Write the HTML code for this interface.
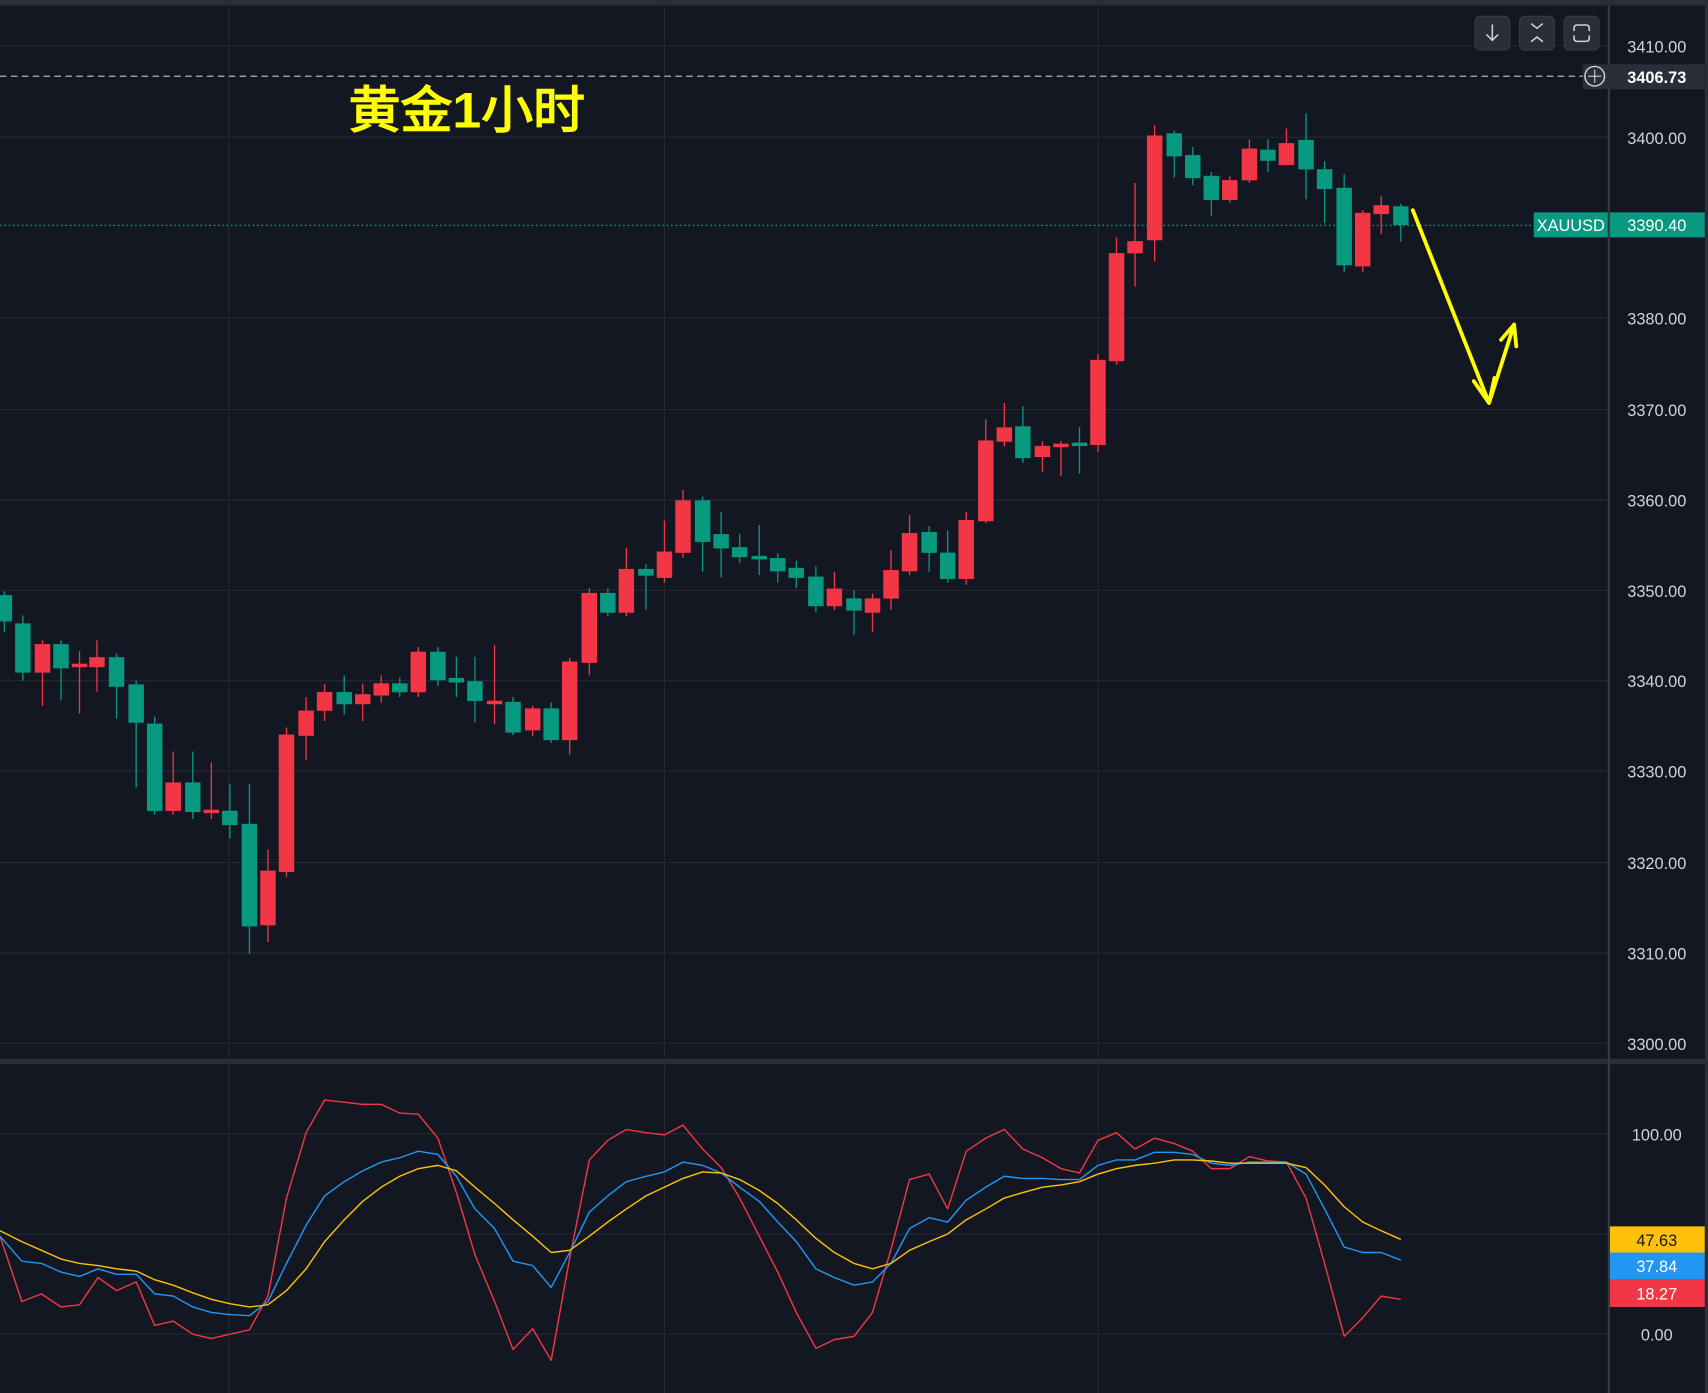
<!DOCTYPE html>
<html><head><meta charset="utf-8"><style>
html,body{margin:0;padding:0;background:#131722;overflow:hidden}
svg{display:block}
text{font-family:"Liberation Sans","DejaVu Sans",sans-serif}
</style></head><body>
<svg width="1708" height="1393" viewBox="0 0 1568 1279" preserveAspectRatio="none" xmlns="http://www.w3.org/2000/svg">
<rect width="1568" height="1279" fill="#131722"/>
<rect x="0" y="0" width="1568" height="5" fill="#2a2e39"/>
<g stroke="#242832" stroke-width="1">
<line x1="0" y1="42" x2="1477" y2="42"/><line x1="0" y1="126" x2="1477" y2="126"/><line x1="0" y1="292" x2="1477" y2="292"/><line x1="0" y1="376" x2="1477" y2="376"/><line x1="0" y1="459" x2="1477" y2="459"/><line x1="0" y1="542" x2="1477" y2="542"/><line x1="0" y1="625" x2="1477" y2="625"/><line x1="0" y1="708" x2="1477" y2="708"/><line x1="0" y1="792" x2="1477" y2="792"/><line x1="0" y1="875" x2="1477" y2="875"/><line x1="0" y1="958" x2="1477" y2="958"/>
<line x1="0" y1="1041" x2="1477" y2="1041"/><line x1="0" y1="1133" x2="1477" y2="1133"/><line x1="0" y1="1225" x2="1477" y2="1225"/>
<line x1="210" y1="5" x2="210" y2="1279"/><line x1="610" y1="5" x2="610" y2="1279"/><line x1="1008" y1="5" x2="1008" y2="1279"/>
</g>
<rect x="0" y="972" width="1568" height="5" fill="#2a2e39"/>
<line x1="1477" y1="5" x2="1477" y2="1279" stroke="#363a45" stroke-width="2"/>
<rect x="1565" y="5" width="3" height="1274" fill="#2a2e39"/>
<g fill="#d1d4dc" font-size="15" text-anchor="middle">
<text x="1521" y="48">3410.00</text><text x="1521" y="132">3400.00</text><text x="1521" y="298">3380.00</text><text x="1521" y="382">3370.00</text><text x="1521" y="465">3360.00</text><text x="1521" y="548">3350.00</text><text x="1521" y="631">3340.00</text><text x="1521" y="714">3330.00</text><text x="1521" y="798">3320.00</text><text x="1521" y="881">3310.00</text><text x="1521" y="964">3300.00</text>
<text x="1521" y="1047">100.00</text><text x="1521" y="1231">0.00</text>
</g>
<line x1="0" y1="70" x2="1453" y2="70" stroke="#b2b5be" stroke-width="1.2" stroke-dasharray="6,4"/>
<rect x="1453" y="59" width="112" height="23" fill="#2a2e39"/>
<circle cx="1464" cy="70" r="9" fill="none" stroke="#d1d4dc" stroke-width="1.3"/>
<line x1="1458" y1="70" x2="1470" y2="70" stroke="#d1d4dc"/><line x1="1464" y1="64" x2="1464" y2="76" stroke="#d1d4dc"/>
<text x="1521" y="76" fill="#ffffff" font-size="15" font-weight="bold" text-anchor="middle">3406.73</text>
<line x1="0" y1="207" x2="1408" y2="207" stroke="#089981" stroke-width="1.2" stroke-dasharray="1.5,2.5"/>
<rect x="1408" y="195" width="68" height="23" fill="#089981"/>
<rect x="1478" y="195" width="87" height="23" fill="#089981"/>
<text x="1442" y="212" fill="#fff" font-size="15" text-anchor="middle">XAUUSD</text>
<text x="1521" y="212" fill="#fff" font-size="15" text-anchor="middle">3390.40</text>
<g fill="#2a2e39" stroke="#363a45"><rect x="1354" y="15" width="32" height="31" rx="5"/><rect x="1395" y="15" width="32" height="31" rx="5"/><rect x="1436" y="15" width="32" height="31" rx="5"/></g>
<g stroke="#d1d4dc" stroke-width="1.4" fill="none" stroke-linecap="round">
<path d="M1370 23 V37 M1365 32 L1370 37 L1375 32"/>
<path d="M1406 22 L1411 26 L1416 22 M1406 38 L1411 34 L1416 38"/>
<path d="M1445 28 V26 Q1445 23 1448 23 H1456 Q1459 23 1459 26 V28 M1445 33 V35 Q1445 38 1448 38 H1456 Q1459 38 1459 35 V33"/>
</g>
<text x="320" y="117" fill="#ffff00" font-size="46" font-weight="900" textLength="217" lengthAdjust="spacingAndGlyphs" font-family="'Noto Serif CJK SC','Liberation Serif',serif">黄金<tspan font-family="'Liberation Sans',sans-serif" font-weight="bold">1</tspan>小时</text>
<g stroke-width="1.2">
<g stroke="#089981" fill="#089981">
<line x1="4" y1="543" x2="4" y2="580"/><rect x="-2.5" y="547" width="13" height="23"/>
<line x1="21" y1="565" x2="21" y2="625"/><rect x="14.5" y="573" width="13" height="44"/>
<line x1="56" y1="588" x2="56" y2="643"/><rect x="49.5" y="592" width="13" height="21"/>
<line x1="107" y1="600" x2="107" y2="660"/><rect x="100.5" y="604" width="13" height="26"/>
<line x1="125" y1="625" x2="125" y2="723"/><rect x="118.5" y="629" width="13" height="34"/>
<line x1="142" y1="658" x2="142" y2="748"/><rect x="135.5" y="665" width="13" height="79"/>
<line x1="177" y1="690" x2="177" y2="752"/><rect x="170.5" y="719" width="13" height="26"/>
<line x1="211" y1="720" x2="211" y2="770"/><rect x="204.5" y="745" width="13" height="12"/>
<line x1="229" y1="720" x2="229" y2="876"/><rect x="222.5" y="757" width="13" height="93"/>
<line x1="316" y1="620" x2="316" y2="656"/><rect x="309.5" y="636" width="13" height="10"/>
<line x1="367" y1="622" x2="367" y2="640"/><rect x="360.5" y="628" width="13" height="7"/>
<line x1="402" y1="594" x2="402" y2="630"/><rect x="395.5" y="599" width="13" height="25"/>
<line x1="419" y1="603" x2="419" y2="640"/><rect x="412.5" y="623" width="13" height="3"/>
<line x1="436" y1="603" x2="436" y2="663"/><rect x="429.5" y="626" width="13" height="17"/>
<line x1="471" y1="640" x2="471" y2="675"/><rect x="464.5" y="645" width="13" height="27"/>
<line x1="506" y1="645" x2="506" y2="682"/><rect x="499.5" y="651" width="13" height="28"/>
<line x1="558" y1="540" x2="558" y2="566"/><rect x="551.5" y="545" width="13" height="17"/>
<line x1="593" y1="518" x2="593" y2="560"/><rect x="586.5" y="523" width="13" height="5"/>
<line x1="645" y1="456" x2="645" y2="525"/><rect x="638.5" y="460" width="13" height="37"/>
<line x1="662" y1="470" x2="662" y2="530"/><rect x="655.5" y="491" width="13" height="12"/>
<line x1="679" y1="490" x2="679" y2="517"/><rect x="672.5" y="503" width="13" height="8"/>
<line x1="697" y1="482" x2="697" y2="528"/><rect x="690.5" y="511" width="13" height="2"/>
<line x1="714" y1="508" x2="714" y2="535"/><rect x="707.5" y="513" width="13" height="11"/>
<line x1="731" y1="515" x2="731" y2="540"/><rect x="724.5" y="522" width="13" height="8"/>
<line x1="749" y1="520" x2="749" y2="562"/><rect x="742.5" y="530" width="13" height="26"/>
<line x1="784" y1="542" x2="784" y2="583"/><rect x="777.5" y="550" width="13" height="10"/>
<line x1="853" y1="483" x2="853" y2="525"/><rect x="846.5" y="489" width="13" height="18"/>
<line x1="870" y1="487" x2="870" y2="535"/><rect x="863.5" y="508" width="13" height="23"/>
<line x1="939" y1="373" x2="939" y2="425"/><rect x="932.5" y="392" width="13" height="28"/>
<line x1="991" y1="392" x2="991" y2="435"/><rect x="984.5" y="407" width="13" height="2"/>
<line x1="1078" y1="120" x2="1078" y2="163"/><rect x="1071.5" y="123" width="13" height="20"/>
<line x1="1095" y1="135" x2="1095" y2="170"/><rect x="1088.5" y="143" width="13" height="20"/>
<line x1="1112" y1="158" x2="1112" y2="198"/><rect x="1105.5" y="162" width="13" height="21"/>
<line x1="1164" y1="128" x2="1164" y2="158"/><rect x="1157.5" y="138" width="13" height="9"/>
<line x1="1199" y1="104" x2="1199" y2="183"/><rect x="1192.5" y="129" width="13" height="26"/>
<line x1="1216" y1="148" x2="1216" y2="205"/><rect x="1209.5" y="156" width="13" height="17"/>
<line x1="1234" y1="160" x2="1234" y2="250"/><rect x="1227.5" y="173" width="13" height="70"/>
<line x1="1286" y1="187" x2="1286" y2="222"/><rect x="1279.5" y="190" width="13" height="16"/>
</g>
<g stroke="#f23645" fill="#f23645">
<line x1="39" y1="588" x2="39" y2="648"/><rect x="32.5" y="592" width="13" height="25"/>
<line x1="73" y1="598" x2="73" y2="655"/><rect x="66.5" y="610" width="13" height="2"/>
<line x1="89" y1="588" x2="89" y2="635"/><rect x="82.5" y="604" width="13" height="8"/>
<line x1="159" y1="690" x2="159" y2="748"/><rect x="152.5" y="719" width="13" height="25"/>
<line x1="194" y1="700" x2="194" y2="752"/><rect x="187.5" y="744" width="13" height="2"/>
<line x1="246" y1="780" x2="246" y2="865"/><rect x="239.5" y="800" width="13" height="49"/>
<line x1="263" y1="668" x2="263" y2="805"/><rect x="256.5" y="675" width="13" height="125"/>
<line x1="281" y1="640" x2="281" y2="698"/><rect x="274.5" y="653" width="13" height="22"/>
<line x1="298" y1="628" x2="298" y2="662"/><rect x="291.5" y="636" width="13" height="16"/>
<line x1="333" y1="628" x2="333" y2="662"/><rect x="326.5" y="638" width="13" height="8"/>
<line x1="350" y1="620" x2="350" y2="645"/><rect x="343.5" y="628" width="13" height="10"/>
<line x1="384" y1="594" x2="384" y2="640"/><rect x="377.5" y="599" width="13" height="36"/>
<line x1="454" y1="592" x2="454" y2="665"/><rect x="447.5" y="644" width="13" height="2"/>
<line x1="489" y1="648" x2="489" y2="676"/><rect x="482.5" y="651" width="13" height="19"/>
<line x1="523" y1="604" x2="523" y2="693"/><rect x="516.5" y="608" width="13" height="71"/>
<line x1="541" y1="540" x2="541" y2="620"/><rect x="534.5" y="545" width="13" height="63"/>
<line x1="575" y1="503" x2="575" y2="566"/><rect x="568.5" y="523" width="13" height="39"/>
<line x1="610" y1="478" x2="610" y2="535"/><rect x="603.5" y="507" width="13" height="23"/>
<line x1="627" y1="450" x2="627" y2="512"/><rect x="620.5" y="460" width="13" height="47"/>
<line x1="766" y1="525" x2="766" y2="560"/><rect x="759.5" y="541" width="13" height="15"/>
<line x1="801" y1="545" x2="801" y2="580"/><rect x="794.5" y="550" width="13" height="12"/>
<line x1="818" y1="505" x2="818" y2="560"/><rect x="811.5" y="524" width="13" height="25"/>
<line x1="835" y1="473" x2="835" y2="528"/><rect x="828.5" y="490" width="13" height="34"/>
<line x1="887" y1="470" x2="887" y2="537"/><rect x="880.5" y="478" width="13" height="53"/>
<line x1="905" y1="385" x2="905" y2="480"/><rect x="898.5" y="405" width="13" height="73"/>
<line x1="922" y1="370" x2="922" y2="410"/><rect x="915.5" y="393" width="13" height="12"/>
<line x1="957" y1="405" x2="957" y2="433"/><rect x="950.5" y="410" width="13" height="9"/>
<line x1="974" y1="405" x2="974" y2="437"/><rect x="967.5" y="408" width="13" height="2"/>
<line x1="1008" y1="325" x2="1008" y2="415"/><rect x="1001.5" y="331" width="13" height="77"/>
<line x1="1025" y1="218" x2="1025" y2="335"/><rect x="1018.5" y="233" width="13" height="98"/>
<line x1="1042" y1="168" x2="1042" y2="263"/><rect x="1035.5" y="222" width="13" height="10"/>
<line x1="1060" y1="115" x2="1060" y2="240"/><rect x="1053.5" y="125" width="13" height="95"/>
<line x1="1129" y1="162" x2="1129" y2="186"/><rect x="1122.5" y="166" width="13" height="17"/>
<line x1="1147" y1="128" x2="1147" y2="168"/><rect x="1140.5" y="137" width="13" height="28"/>
<line x1="1181" y1="118" x2="1181" y2="152"/><rect x="1174.5" y="132" width="13" height="19"/>
<line x1="1251" y1="193" x2="1251" y2="250"/><rect x="1244.5" y="196" width="13" height="48"/>
<line x1="1268" y1="180" x2="1268" y2="215"/><rect x="1261.5" y="189" width="13" height="7"/>
</g>
</g>
<g stroke="#ffff00" stroke-width="3.5" fill="none" stroke-linecap="round" stroke-linejoin="round">
<path d="M1297 193 L1367 370 L1390 298"/>
<path d="M1353 350 L1367 370 L1372 347"/>
<path d="M1378 312 L1390 298 L1392 318"/>
</g>
<g fill="none" stroke-width="1.3" stroke-linejoin="round">
<polyline stroke="#f23645" points="0,1135 20,1195 38,1188 56,1200 73,1198 90,1173 107,1185 125,1177 142,1217 159,1213 177,1225 194,1229 211,1225 229,1221 246,1190 263,1100 281,1040 298,1010 316,1012 333,1014 350,1014 367,1022 384,1023 402,1045 419,1095 436,1152 454,1195 471,1239 489,1220 506,1249 523,1155 541,1065 558,1047 575,1037 593,1040 610,1042 627,1033 645,1055 662,1072 679,1100 697,1135 714,1168 731,1205 749,1238 766,1230 784,1227 801,1205 818,1147 835,1083 853,1078 870,1110 887,1057 905,1045 922,1037 939,1055 957,1063 974,1073 991,1077 1008,1047 1025,1040 1042,1055 1060,1045 1078,1050 1095,1057 1112,1073 1129,1073 1147,1062 1164,1066 1181,1067 1199,1100 1216,1160 1234,1227 1251,1210 1268,1190 1286,1193"/>
<polyline stroke="#2196f3" points="0,1135 20,1158 38,1160 56,1168 73,1172 90,1165 107,1170 125,1170 142,1188 159,1190 177,1200 194,1205 211,1207 229,1208 246,1195 263,1160 281,1125 298,1098 316,1085 333,1075 350,1067 367,1063 384,1057 402,1060 419,1080 436,1110 454,1128 471,1158 489,1162 506,1182 523,1150 541,1113 558,1098 575,1085 593,1080 610,1076 627,1067 645,1070 662,1077 679,1090 697,1103 714,1122 731,1140 749,1165 766,1173 784,1180 801,1177 818,1160 835,1128 853,1118 870,1122 887,1102 905,1090 922,1080 939,1082 957,1082 974,1083 991,1083 1008,1070 1025,1065 1042,1065 1060,1058 1078,1058 1095,1060 1112,1068 1129,1070 1147,1067 1164,1067 1181,1067 1199,1078 1216,1110 1234,1145 1251,1150 1268,1150 1286,1157"/>
<polyline stroke="#ffc107" points="0,1130 20,1140 38,1148 56,1156 73,1160 90,1162 107,1165 125,1167 142,1175 159,1180 177,1187 194,1193 211,1197 229,1200 246,1198 263,1185 281,1165 298,1140 316,1120 333,1103 350,1090 367,1080 384,1073 402,1070 419,1075 436,1090 454,1105 471,1120 489,1135 506,1150 523,1148 541,1135 558,1122 575,1110 593,1098 610,1090 627,1082 645,1076 662,1077 679,1083 697,1093 714,1105 731,1120 749,1137 766,1150 784,1160 801,1165 818,1160 835,1148 853,1140 870,1133 887,1120 905,1110 922,1100 939,1095 957,1090 974,1088 991,1085 1008,1078 1025,1073 1042,1070 1060,1068 1078,1065 1095,1065 1112,1066 1129,1068 1147,1068 1164,1068 1181,1068 1199,1072 1216,1088 1234,1108 1251,1122 1268,1130 1286,1138"/>
</g>
<rect x="1478" y="1126" width="87" height="24" fill="#ffc107"/>
<rect x="1478" y="1150" width="87" height="25" fill="#2196f3"/>
<rect x="1478" y="1175" width="87" height="25" fill="#f23645"/>
<g font-size="15" text-anchor="middle">
<text x="1521" y="1144" fill="#131722">47.63</text>
<text x="1521" y="1168" fill="#fff">37.84</text>
<text x="1521" y="1193" fill="#fff">18.27</text>
</g>
</svg>
</body></html>
